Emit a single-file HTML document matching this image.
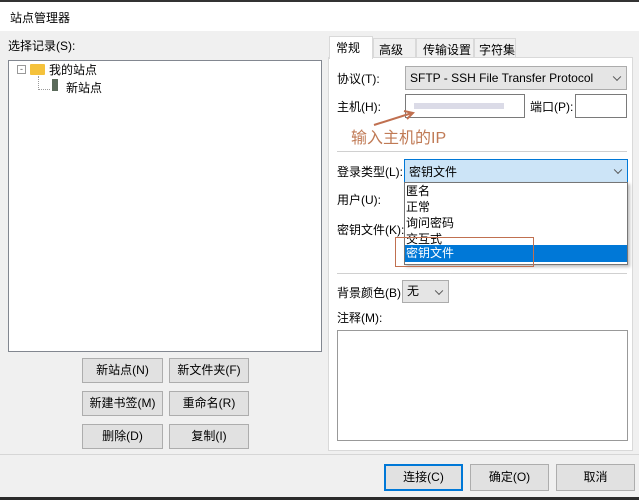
<!DOCTYPE html><html><head><meta charset="utf-8"><style>
*{box-sizing:border-box;margin:0;padding:0}
body{width:639px;height:500px;background:#f0f0f0;font-family:"Liberation Sans","Noto Sans CJK SC",sans-serif;font-size:12px;color:#000;position:relative;overflow:hidden}
.a{position:absolute;white-space:nowrap}
.btn{position:absolute;background:#e1e1e1;border:1px solid #adadad;text-align:center;line-height:22px}
.sel{position:absolute;background:#e5e5e5;border:1px solid #acacac;padding-left:4px}
.inp{position:absolute;background:#fff;border:1px solid #7a7a7a}
.chev{position:absolute;right:6px;top:50%;width:6px;height:6px;border-right:1px solid #555;border-bottom:1px solid #555;transform:translateY(-70%) rotate(45deg)}
</style></head><body>
<div class="a" style="left:0;top:0;width:639px;height:31px;background:#fff;border-top:2px solid #333"></div>
<div class="a" style="left:10px;top:9px;font-size:12px">站点管理器</div>
<div class="a" style="left:8px;top:37px">选择记录(S):</div>
<div class="a" style="left:8px;top:60px;width:314px;height:292px;background:#fff;border:1px solid #828790"></div>
<div class="a" style="left:17px;top:65px;width:9px;height:9px;border:1px solid #999;font-size:9px;line-height:7px;text-align:center;color:#555">-</div>
<div class="a" style="left:30px;top:64px;width:15px;height:11px;background:#f5c23c;border-radius:1px"></div>
<div class="a" style="left:49px;top:61px">我的站点</div>
<div class="a" style="left:38px;top:76px;height:14px;width:12px;border-left:1px dotted #999;border-bottom:1px dotted #999"></div>
<div class="a" style="left:52px;top:79px;width:6px;height:12px;background:#5a6a5a"></div>
<div class="a" style="left:66px;top:79px">新站点</div>
<div class="btn" style="left:82px;top:358px;width:81px;height:25px">新站点(N)</div>
<div class="btn" style="left:169px;top:358px;width:80px;height:25px">新文件夹(F)</div>
<div class="btn" style="left:82px;top:391px;width:81px;height:25px">新建书签(M)</div>
<div class="btn" style="left:169px;top:391px;width:80px;height:25px">重命名(R)</div>
<div class="btn" style="left:82px;top:424px;width:81px;height:25px">删除(D)</div>
<div class="btn" style="left:169px;top:424px;width:80px;height:25px">复制(I)</div>
<div class="a" style="left:328px;top:57px;width:305px;height:394px;background:#fff;border:1px solid #d9d9d9"></div>
<div class="a" style="left:329px;top:36px;width:44px;height:23px;background:#fff;border:1px solid #d9d9d9;border-bottom:none;padding:2px 0 0 6px">常规</div>
<div class="a" style="left:373px;top:38px;width:43px;height:20px;border:1px solid #d9d9d9;padding:2px 0 0 5px">高级</div>
<div class="a" style="left:416px;top:38px;width:58px;height:20px;border:1px solid #d9d9d9;padding:2px 0 0 6px">传输设置</div>
<div class="a" style="left:474px;top:38px;width:42px;height:20px;border:1px solid #d9d9d9;padding:2px 0 0 4px">字符集</div>
<div class="a" style="left:337px;top:70px">协议(T):</div>
<div class="sel" style="left:405px;top:66px;width:222px;height:24px;line-height:22px;font-size:12px">SFTP - SSH File Transfer Protocol<span class="chev"></span></div>
<div class="a" style="left:337px;top:98px">主机(H):</div>
<div class="inp" style="left:405px;top:94px;width:120px;height:24px"><div style="margin:8px 0 0 8px;width:90px;height:6px;background:#ccd;opacity:.7"></div></div>
<div class="a" style="left:530px;top:98px">端口(P):</div>
<div class="inp" style="left:575px;top:94px;width:52px;height:24px"></div>
<svg class="a" style="left:370px;top:108px" width="50" height="20"><line x1="4" y1="17" x2="42" y2="5" stroke="#c07050" stroke-width="2"/><path d="M34 3 L43 5 L37 11" fill="none" stroke="#c07050" stroke-width="2"/></svg>
<div class="a" style="left:351px;top:124px;font-size:16px;color:#c07a55">输入主机的IP</div>
<div class="a" style="left:337px;top:151px;width:290px;height:1px;background:#d0d0d0"></div>
<div class="a" style="left:337px;top:163px">登录类型(L):</div>
<div class="a" style="left:404px;top:159px;width:224px;height:24px;background:#cce4f7;border:1px solid #0078d7;padding:3px 0 0 4px">密钥文件<span class="chev"></span></div>
<div class="a" style="left:337px;top:191px">用户(U):</div>
<div class="a" style="left:337px;top:221px">密钥文件(K):</div>
<div class="a" style="left:404px;top:182px;width:224px;height:83px;background:#fff;border:1px solid #767676;box-shadow:2px 2px 3px rgba(0,0,0,.25)"></div>
<div class="a" style="left:406px;top:183px;line-height:16px">匿名<br>正常<br>询问密码<br>交互式</div>
<div class="a" style="left:405px;top:245px;width:222px;height:17px;background:#0078d7;color:#fff;padding-left:1px;line-height:16px">密钥文件</div>
<div class="a" style="left:395px;top:237px;width:139px;height:30px;border:1px solid #c07050"></div>
<div class="a" style="left:337px;top:273px;width:290px;height:1px;background:#d0d0d0"></div>
<div class="a" style="left:337px;top:284px">背景颜色(B)</div>
<div class="sel" style="left:402px;top:280px;width:47px;height:23px;line-height:21px">无<span class="chev"></span></div>
<div class="a" style="left:337px;top:309px">注释(M):</div>
<div class="inp" style="left:337px;top:330px;width:291px;height:111px;border-color:#999"></div>
<div class="a" style="left:0;top:454px;width:639px;height:1px;background:#d6d6d6"></div>
<div class="btn" style="left:384px;top:464px;width:79px;height:27px;border:2px solid #0078d7;line-height:23px">连接(C)</div>
<div class="btn" style="left:470px;top:464px;width:79px;height:27px;line-height:25px">确定(O)</div>
<div class="btn" style="left:556px;top:464px;width:79px;height:27px;line-height:25px">取消</div>
<div class="a" style="left:0;top:497px;width:639px;height:3px;background:#2b2b2b"></div>
</body></html>
